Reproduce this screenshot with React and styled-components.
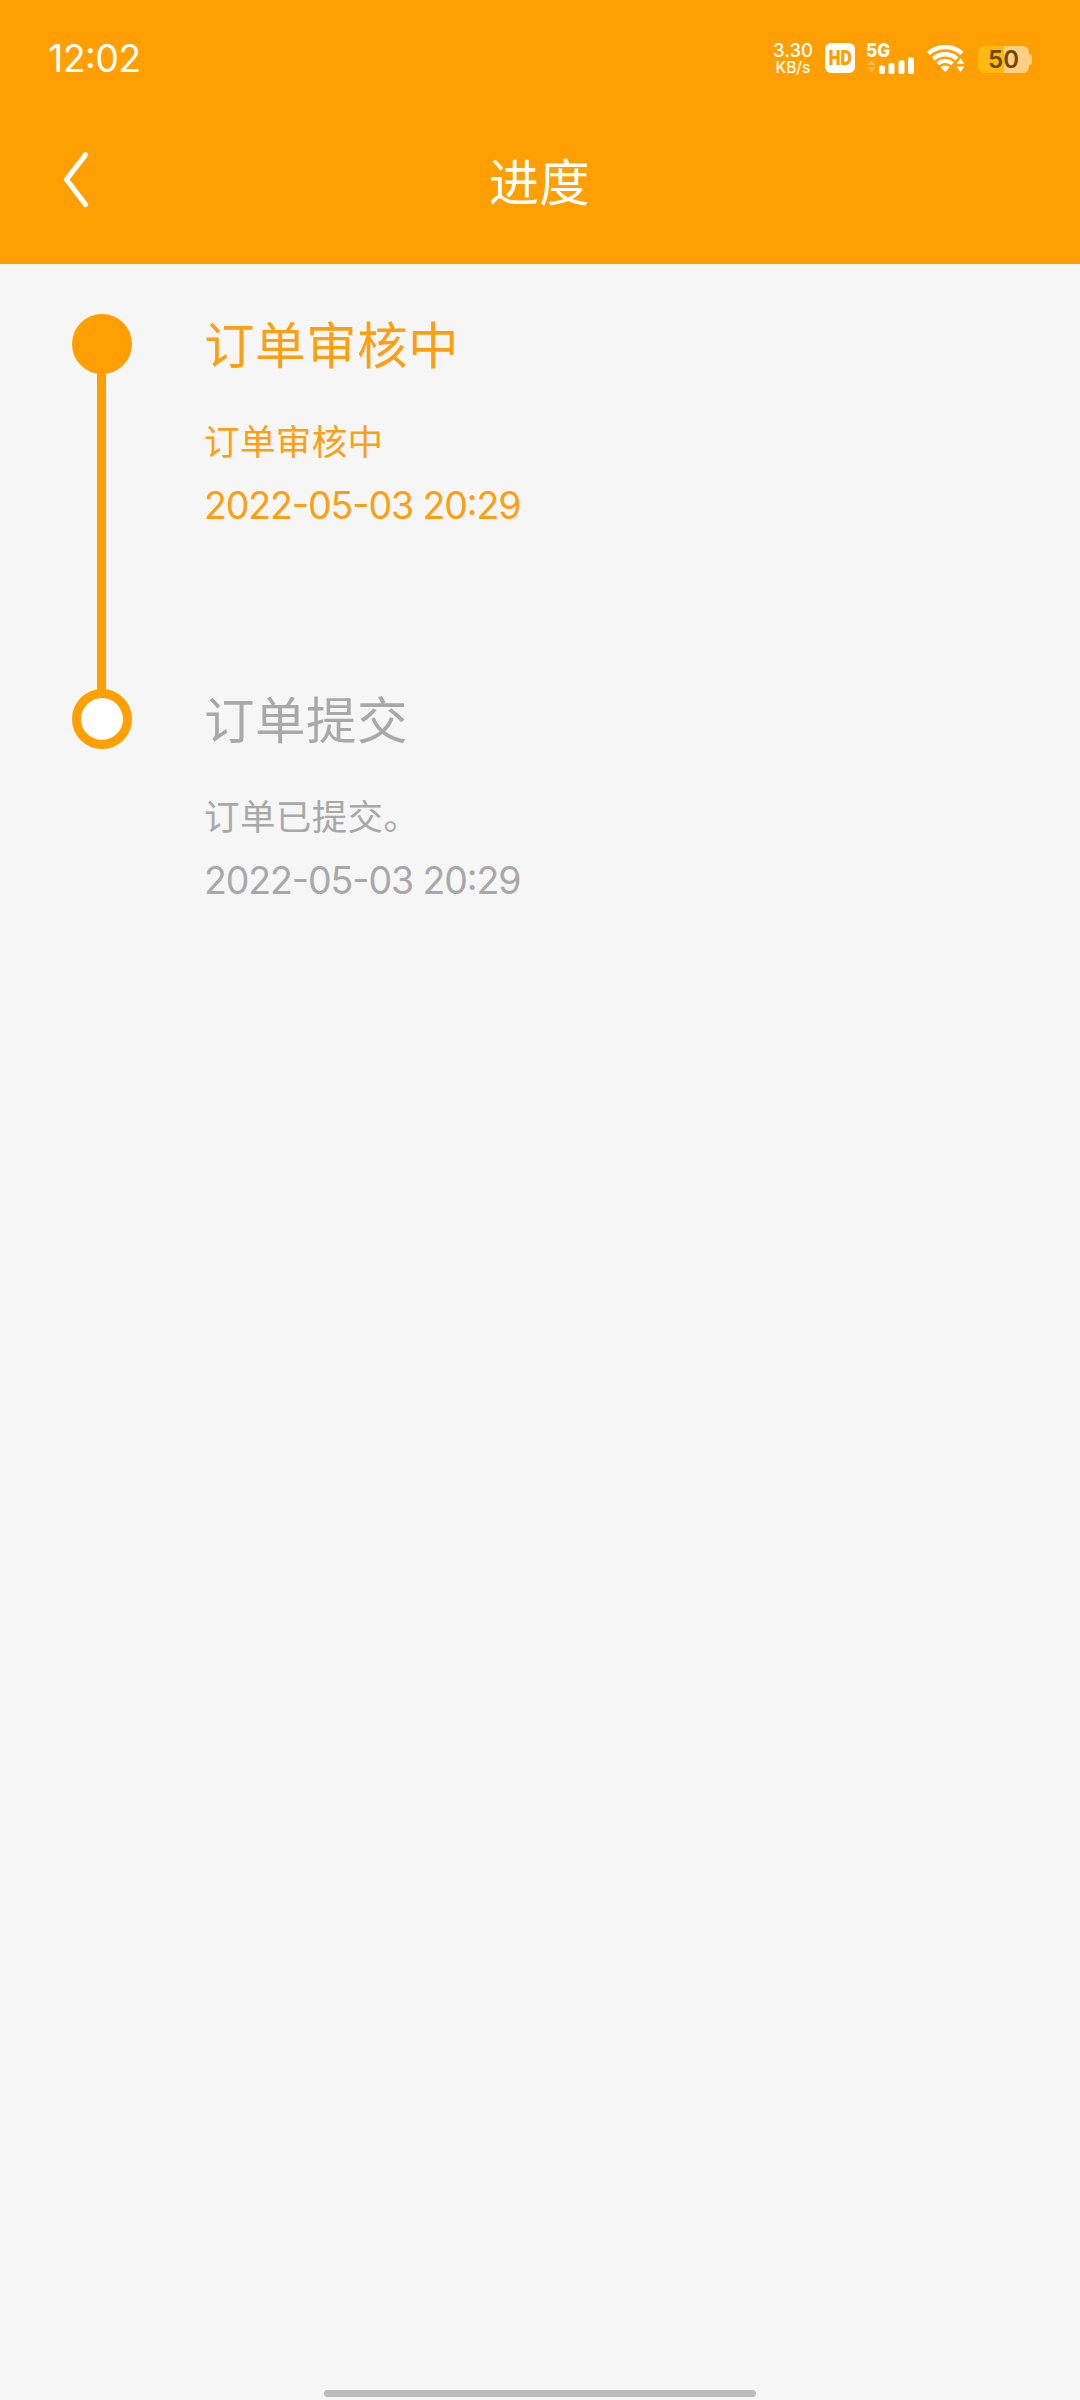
import React from 'react';
import styled, { createGlobalStyle } from 'styled-components';

const ORANGE = '#ff9f02';

const GlobalStyle = createGlobalStyle`
  html, body, #root {
    margin: 0;
    height: 100%;
  }

  body {
    background-color: #f6f6f6;
    font-family: Inter, 'Noto Sans CJK SC', sans-serif;
  }
`;

const Page = styled.div`
  display: flex;
  flex-direction: column;
  height: 2400px;
  width: 1080px;
  overflow: hidden;
  background-color: #f6f6f6;
`;

const Header = styled.header`
  height: 264px;
  background-color: ${ORANGE};
  color: #fff;
`;

const StatusBar = styled.div`
  display: flex;
  align-items: center;
  justify-content: space-between;
  height: 116px;
  padding: 0 48px;
  box-sizing: border-box;
`;

const Clock = styled.span`
  padding-top: 2px;
  font-size: 37.5px;
  line-height: 44px;
  letter-spacing: -0.6px;
  font-feature-settings: 'case';
`;

const StatusIcons = styled.div`
  display: flex;
  align-items: center;
`;

const NetSpeed = styled.div`
  display: flex;
  flex-direction: column;
  align-items: center;
  width: 40px;
  margin-right: 12px;
  padding-top: 2px;
  font-weight: 500;
`;

const SpeedValue = styled.span`
  font-size: 18.5px;
  line-height: 17px;
`;

const SpeedUnit = styled.span`
  font-size: 15.5px;
  line-height: 17px;
`;

const HdBadge = styled.div`
  display: flex;
  align-items: center;
  justify-content: center;
  width: 30px;
  height: 30px;
  margin-right: 11px;
  border-radius: 6px;
  background-color: #fff;
  color: ${ORANGE};
`;

const HdText = styled.span`
  font-size: 19.5px;
  line-height: 30px;
  font-weight: 900;
  transform: scaleX(0.8);
`;

const Signal = styled.div`
  display: flex;
  flex-direction: column;
  width: 49px;
  height: 31px;
  margin-right: 12px;
`;

const SignalLabel = styled.span`
  padding-top: 1px;
  font-size: 19px;
  line-height: 13px;
  font-weight: 800;
  transform: scaleX(0.9);
  transform-origin: left;
`;

const Wifi = styled.svg`
  width: 38px;
  height: 30px;
  margin-right: 13px;
`;

const Battery = styled.div`
  display: flex;
  align-items: center;
  padding-top: 2px;
`;

const BatteryBody = styled.div`
  display: flex;
  align-items: center;
  justify-content: center;
  width: 51px;
  height: 27px;
  border-radius: 6px;
  background: linear-gradient(to right, #ffba10 50%, #ffcf83 50%);
  color: #704600;
  font-size: 24px;
  font-weight: 600;
`;

const BatteryTip = styled.div`
  width: 3px;
  height: 11px;
  border-radius: 0 3px 3px 0;
  background-color: #ffcf83;
`;

const NavBar = styled.nav`
  display: grid;
  grid-template-columns: 150px 1fr 150px;
  align-items: center;
  height: 132px;
`;

const BackButton = styled.button`
  display: flex;
  width: 40px;
  height: 60px;
  margin-left: 56px;
  padding: 0;
  border: none;
  background: none;
`;

const Title = styled.h1`
  margin: 0;
  padding: 2px 2px 0 0;
  text-align: center;
  font-size: 50.5px;
  line-height: 72px;
  font-weight: 400;
`;

const Timeline = styled.main`
  flex: 1;
  padding: 50px 72px 0;
`;

const Step = styled.section`
  display: flex;
  height: 375px;
  color: ${({ $active }) => ($active ? '#fc9f12' : '#a8a8a8')};
`;

const Track = styled.div`
  display: flex;
  flex-direction: column;
  align-items: center;
  width: 60px;
  margin-right: 72px;
`;

const Dot = styled.div`
  box-sizing: border-box;
  flex: none;
  width: 60px;
  height: 60px;
  border: 9px solid ${ORANGE};
  border-radius: 50%;
  background-color: ${({ $active }) => ($active ? ORANGE : '#fff')};
`;

const Line = styled.div`
  flex: 1;
  width: 9px;
  margin: -2px 1px -2px 0;
  background-color: ${ORANGE};
`;

const StepBody = styled.div`
  display: flex;
  flex-direction: column;
`;

const StepTitle = styled.h2`
  margin: -4px 0 0;
  font-size: 50.5px;
  line-height: 72px;
  font-weight: 400;
  letter-spacing: 0.5px;
`;

const StepText = styled.p`
  margin: 35px 0 0;
  font-size: 35.5px;
  line-height: 52px;
  letter-spacing: 0.4px;
`;

const StepTime = styled.time`
  margin-top: 14px;
  font-size: 37.5px;
  line-height: 46px;
  letter-spacing: -1.1px;
  font-feature-settings: 'case';
`;

const Footer = styled.footer`
  display: flex;
  justify-content: center;
  height: 10px;
`;

const HomeIndicator = styled.div`
  width: 432px;
  height: 7px;
  border-radius: 4px;
  background-color: #bbb;
`;

const steps = [
  { title: '订单审核中', text: '订单审核中', time: '2022-05-03 20:29', active: true },
  { title: '订单提交', text: '订单已提交。', time: '2022-05-03 20:29', active: false },
];

function SignalBars() {
  return (
    <svg width="49" height="17" viewBox="0 0 49 17" fill="#fff">
      <path d="M1 8 5.500 3.500 10 8zM1 10.500h9L5.500 15z" opacity="0.3" />
      <rect x="13" y="8.500" width="6" height="8.500" rx="1.800" />
      <rect x="22.500" y="6" width="6" height="11" rx="1.800" />
      <rect x="32.500" y="3.300" width="6" height="13.700" rx="1.800" />
      <rect x="42" y="0.600" width="6" height="16.400" rx="1.800" />
    </svg>
  );
}

function WifiIcon() {
  return (
    <Wifi viewBox="0 0 38 30" fill="none" stroke="#fff" strokeWidth="4.400">
      <path d="M1.500 10.400a25 25 0 0 1 33.400 0" />
      <path d="M6.400 15.800a17.700 17.700 0 0 1 23.600 0" />
      <path d="M10.900 20.800a11 11 0 0 1 14.600 0" strokeWidth="4" />
      <path d="M13.600 24.300a6.800 6.800 0 0 1 9.200 0L18.200 29z" fill="#fff" stroke="none" />
      <path d="M29.600 20.800 33.500 15.300 37.400 20.800zM29.600 23.500h7.800L33.500 29z" fill="#fff" stroke={ORANGE} strokeWidth="2.400" paintOrder="stroke" />
    </Wifi>
  );
}

export default function App() {
  return (
    <Page>
      <GlobalStyle />
      <Header>
        <StatusBar>
          <Clock>12:02</Clock>
          <StatusIcons>
            <NetSpeed>
              <SpeedValue>3.30</SpeedValue>
              <SpeedUnit>KB/s</SpeedUnit>
            </NetSpeed>
            <HdBadge>
              <HdText>HD</HdText>
            </HdBadge>
            <Signal>
              <SignalLabel>5G</SignalLabel>
              <SignalBars />
            </Signal>
            <WifiIcon />
            <Battery>
              <BatteryBody>50</BatteryBody>
              <BatteryTip />
            </Battery>
          </StatusIcons>
        </StatusBar>
        <NavBar>
          <BackButton aria-label="返回">
            <svg width="40" height="60" viewBox="0 0 40 60" fill="none" stroke="#fff" strokeWidth="5.200" strokeLinecap="round" strokeLinejoin="round">
              <path d="M29.500 2.800 10.500 27.500 29.500 52.500" />
            </svg>
          </BackButton>
          <Title>进度</Title>
        </NavBar>
      </Header>
      <Timeline>
        {steps.map((step, i) => (
          <Step key={step.title} $active={step.active}>
            <Track>
              <Dot $active={step.active} />
              {i < steps.length - 1 && <Line />}
            </Track>
            <StepBody>
              <StepTitle>{step.title}</StepTitle>
              <StepText>{step.text}</StepText>
              <StepTime>{step.time}</StepTime>
            </StepBody>
          </Step>
        ))}
      </Timeline>
      <Footer>
        <HomeIndicator />
      </Footer>
    </Page>
  );
}
